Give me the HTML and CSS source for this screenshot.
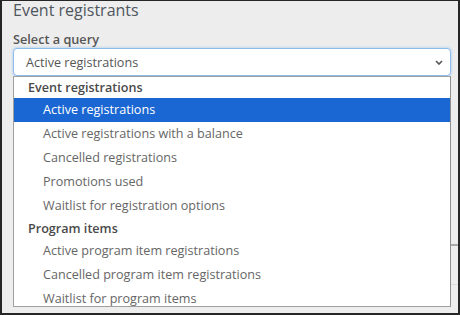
FILE: index.html
```html
<!DOCTYPE html>
<html lang="en">
<head>
  <meta charset="UTF-8" />
  <title>Event registrants</title>
  <link rel="stylesheet" href="styles.css">
</head>
<body>
<div class="frame">
  <h2 class="title">Event registrants</h2>
  <div class="field">
    <div class="field-label">Select a query</div>
    <div class="select">
      <span class="select-value">Active registrations</span>
      <svg class="chevron" width="8" height="5" viewBox="0 0 8 5">
        <path d="M1 1 L4 4 L7 1" fill="none" stroke="#555" stroke-width="1.6"/>
      </svg>
    </div>

    <!-- open dropdown list -->
    <div class="options">
      <div class="group">Event registrations</div>
      <div class="option selected">Active registrations</div>
      <div class="option">Active registrations with a balance</div>
      <div class="option">Cancelled registrations</div>
      <div class="option">Promotions used</div>
      <div class="option">Waitlist for registration options</div>
      <div class="group">Program items</div>
      <div class="option">Active program item registrations</div>
      <div class="option">Cancelled program item registrations</div>
      <div class="option">Waitlist for program items</div>
    </div>
  </div>

  <!-- content behind the dropdown -->
  <div class="behind">
    <div class="behind-row"></div>
    <div class="behind-row light"></div>
  </div>
</div>
</body>
</html>
```

FILE: styles.css
```css
body {
  margin: 0;
  padding: 0;
  background: #fff;
  font-family: 'Open Sans', 'Liberation Sans', sans-serif;
}

.frame {
  width: 460px;
  height: 315px;
  box-sizing: border-box;
  border-style: solid;
  border-color: #262626;
  border-width: 1px 2px 2px 2px;
  background: #ededed;
  padding: 0 7px 0 11px;
  overflow: hidden;
}

.title {
  margin: 0;
  font-size: 16px;
  font-weight: 400;
  line-height: 18px;
  color: #4f5660;
}

.field {
  position: relative;
  margin-top: 11px;
}

.field-label {
  font-size: 12.7px;
  font-weight: 600;
  line-height: 18px;
  color: #555;
}

.select {
  height: 28px;
  box-sizing: border-box;
  border: 1px solid #8cbcec;
  border-radius: 4px;
  box-shadow: 0 0 3px rgba(102, 175, 233, 0.6);
  background: #fff;
  display: flex;
  align-items: center;
  justify-content: space-between;
  padding: 0 7px 0 12px;
}

.select-value {
  font-size: 12.6px;
  color: #555;
}

.chevron {
  display: block;
}

.options {
  position: absolute;
  left: 0;
  right: 0;
  top: 46px;
  height: 231px;
  box-sizing: border-box;
  border: 1px solid #a0a0a0;
  border-right-color: #8f8f8f;
  background: #fff;
  overflow: hidden;
  z-index: 2;
}

.group {
  height: 21px;
  line-height: 21px;
  padding-left: 14px;
  font-size: 12.6px;
  font-weight: 600;
  color: #4a4a4a;
}

.option {
  height: 24px;
  line-height: 24px;
  padding-left: 29px;
  font-size: 12.6px;
  color: #666;
}

.option.selected {
  background: #1a66d2;
  color: #fff;
}

.behind {
  margin-top: 168px;
  margin-right: -7px;
}

.behind-row {
  height: 38px;
  border-top: 2px solid #a9a9a9;
}

.behind-row.light {
  border-top: 1px solid #dcdcdc;
}
```
